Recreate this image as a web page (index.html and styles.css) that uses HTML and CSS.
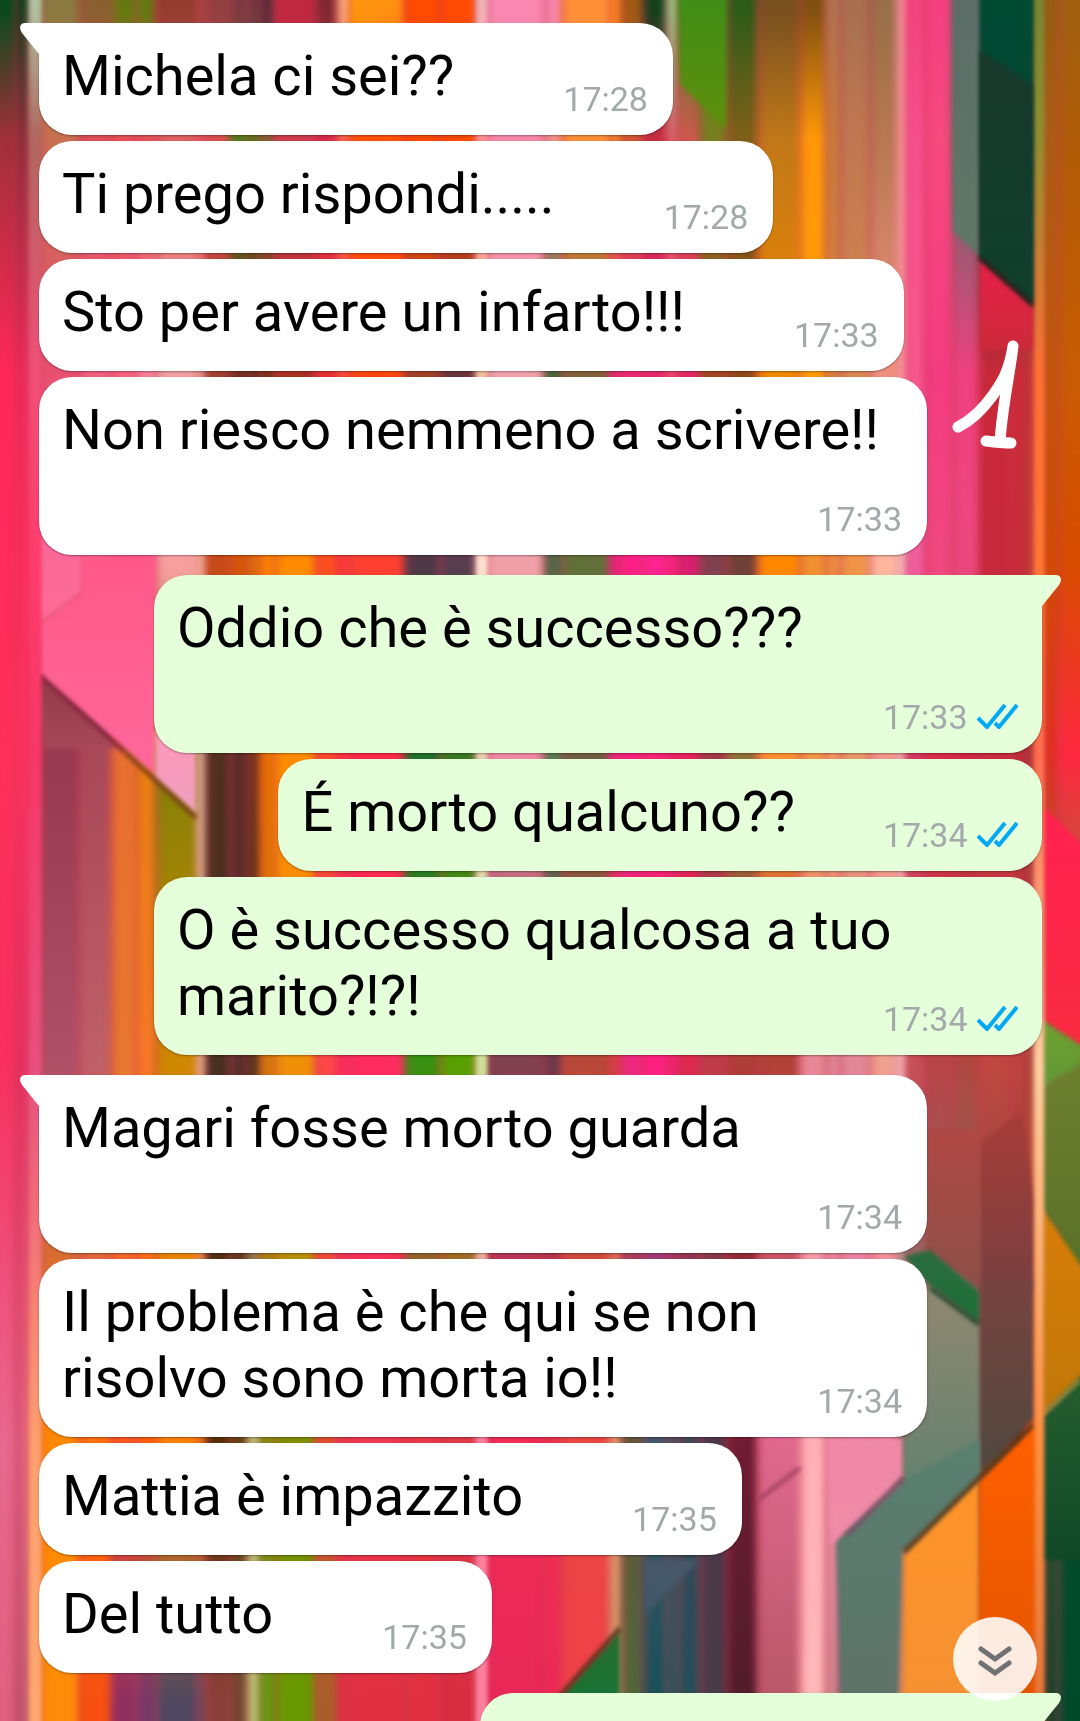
FILE: index.html
```html
<!DOCTYPE html>
<html lang="it">
<head>
    <meta charset="UTF-8">
    <meta name="viewport" content="width=device-width, initial-scale=1.0">
    <title>Chat</title>
    <link rel="stylesheet" href="styles.css">
</head>
<body>
    <svg class="symbols" aria-hidden="true">
        <symbol id="ticks" viewBox="0 0 42 26">
            <path d="M2 15 L11 24 L29 2 M19 20 L23 24 L41 2" fill="none" stroke="#03a9f4" stroke-width="4"/>
        </symbol>
        <symbol id="tail" viewBox="0 0 20 32">
            <path d="M20 0 H5 Q1 0 0 4 Q0 7 2 10 L19 31 L20 32 Z" fill="currentColor"/>
        </symbol>
    </svg>

    <canvas id="wallpaper" class="wallpaper" width="1080" height="1721"></canvas>

    <main class="chat">
        <div class="message first">
            <svg class="tail"><use href="#tail"/></svg>
            Michela ci sei??<time>17:28</time>
        </div>
        <div class="message">Ti prego rispondi.....<time>17:28</time></div>
        <div class="message">Sto per avere un infarto!!!<time>17:33</time></div>
        <div class="message">Non riesco nemmeno a scrivere!!<time>17:33</time></div>

        <div class="message sent first">
            <svg class="tail"><use href="#tail"/></svg>
            Oddio che è successo???<time>17:33 <svg class="ticks"><use href="#ticks"/></svg></time>
        </div>
        <div class="message sent">É morto qualcuno??<time>17:34 <svg class="ticks"><use href="#ticks"/></svg></time></div>
        <div class="message sent">O è successo qualcosa a tuo marito?!?!<time>17:34 <svg class="ticks"><use href="#ticks"/></svg></time></div>

        <div class="message first">
            <svg class="tail"><use href="#tail"/></svg>
            Magari fosse morto guarda<time>17:34</time>
        </div>
        <div class="message">Il problema è che qui se non risolvo sono morta io!!<time>17:34</time></div>
        <div class="message">Mattia è impazzito<time>17:35</time></div>
        <div class="message">Del tutto<time>17:35</time></div>

        <div class="message sent first next">
            <svg class="tail"><use href="#tail"/></svg>
        </div>
    </main>

    <svg class="scribble" viewBox="0 0 70 116" aria-hidden="true">
        <path d="M61 8 C57 36 47 48 41 57 C31 71 20 82 6 89 M61 8 C58 35 50 70 48 104 M34 103 C42 104 50 105 59 105" />
    </svg>

    <button class="scroll-down" aria-label="Vai in fondo">
        <svg viewBox="0 0 34 30"><path d="M3 3 L17 13 L31 3 M3 17 L17 27 L31 17"/></svg>
    </button>

    <script src="wallpaper.js"></script>
</body>
</html>
```
FILE: styles.css
```css
* {
    box-sizing: border-box;
}

body {
    margin: 0;
    height: 100vh;
    overflow: hidden;
    position: relative;
    background-color: #c83850;
    font-family: Roboto, sans-serif;
    color: #000;
}

.symbols {
    position: absolute;
    width: 0;
    height: 0;
}

.wallpaper {
    position: absolute;
    width: 100%;
    height: 100%;
    object-fit: cover;
}


.chat {
    position: relative;
    display: flex;
    flex-direction: column;
    align-items: flex-start;
    gap: 6px;
    height: 100%;
    overflow: hidden;
    padding: 23px 38px 0 39px;
}

.message {
    position: relative;
    display: flow-root;
    flex-shrink: 0;
    max-width: calc(100% - 115px);
    padding: 20px 25px 13px 23px;
    border-radius: 33px;
    background-color: #fff;
    box-shadow: 0 1px 2px rgba(0, 0, 0, 0.35);
    font-size: 56px;
    line-height: 66px;
}

.sent {
    align-self: flex-end;
    padding-right: 24px;
    background-color: #e4ffda;
}

.first {
    border-top-left-radius: 0;
}

.sent.first {
    border-top-left-radius: 33px;
    border-top-right-radius: 0;
}

.message + .first {
    margin-top: 14px;
}

.next {
    width: 56%;
    height: 112px;
}


time {
    float: right;
    margin-top: 33px;
    padding-left: 109px;
    font-size: 34px;
    line-height: 46px;
    color: #a3a9ab;
}

.sent time {
    padding-left: 88px;
}

.ticks {
    width: 42px;
    height: 26px;
}

.tail {
    position: absolute;
    top: 0;
    left: -19px;
    width: 20px;
    height: 32px;
    color: #fff;
}

.sent .tail {
    left: auto;
    right: -19px;
    color: #e4ffda;
    transform: scaleX(-1);
}


.scribble {
    position: absolute;
    top: 338px;
    right: 58px;
    width: 70px;
    height: 116px;
    fill: none;
    stroke: #fff;
    stroke-width: 11px;
    stroke-linecap: round;
    stroke-linejoin: round;
}

.scroll-down {
    position: absolute;
    right: 43px;
    bottom: 20px;
    display: flex;
    align-items: center;
    justify-content: center;
    width: 84px;
    height: 84px;
    padding: 0;
    border: none;
    border-radius: 50%;
    background-color: rgba(255, 255, 255, 0.88);
    cursor: pointer;
}

.scroll-down svg {
    width: 34px;
    height: 30px;
    margin-top: 4px;
    fill: none;
    stroke: #6f7173;
    stroke-width: 5px;
    stroke-linecap: round;
}
```
FILE: wallpaper.js
```js
const canvas = document.getElementById('wallpaper');
const ctx = canvas.getContext('2d');

// heights at which every stripe lists a colour
const rows = [10, 138, 374, 565, 756, 1065, 1440, 1700];

// left edge of the stripe, then its colours from top to bottom
const stripes = [
    [-20, '#0a4a1c #a03038 #ff2858 #ff2c5c #ff3058 #f83060 #e86890 #e06080'],
    [16, '#0a3a16 #8a2c38 #f02858 #ff2c5c #ff3060 #e83060 #e06080 #c05870'],
    [30, '#b0c0a0 #b06860 #f05078 #ff3c6c #f83868 #e85080 #ffa070 #ffa870'],
    [40, '#8a7a40 #c87050 #e85070 #ff6894 #983850 #b05068 #ff8800 #ff8c08'],
    [80, '#8a6030 #e05058 #f06080 #ff6890 #a84858 #c06068 #ff7010 #f85010'],
    [112, '#637a10 #e85058 #f86080 #ff5c8c #e87030 #e87830 #ff5820 #903060'],
    [136, '#637a10 #e85058 #f88098 #ff5890 #e88010 #f87828 #ff6010 #783868'],
    [156, '#943c30 #e06060 #f0a0a0 #f8a0a0 #808008 #d08800 #ff8000 #504860'],
    [198, '#a0483a #f05860 #f0b0a0 #ffd0b0 #e8d0b0 #f8d0a8 #ff8800 #60485c'],
    [206, '#904040 #e05050 #a04030 #c84c18 #503020 #483020 #583008 #8a4038'],
    [230, '#7a3c40 #508018 #703020 #d85808 #582c28 #58302c #604010 #704830'],
    [248, '#6a3a40 #507818 #602c18 #e07008 #683018 #483018 #c0d080 #b8d078'],
    [260, '#582c38 #806030 #783018 #ff8400 #e87000 #d07808 #809010 #609c10'],
    [275, '#c02840 #d03c50 #a83020 #ff8c00 #ff8c00 #f09008 #809000 #689800'],
    [316, '#802830 #d82c48 #e83030 #ff5020 #ff4830 #ff4848 #e05030 #a86028'],
    [338, '#ffb080 #ff6850 #ff5038 #ff3838 #ff3040 #ff2c60 #f03850 #e03040'],
    [350, '#ff9010 #ff5008 #ff4810 #ff4030 #ff2848 #ff2c60 #f03850 #e03040'],
    [405, '#ff4a00 #ff4a00 #a04028 #503848 #207028 #389010 #e83848 #e03040'],
    [440, '#ff4a00 #ff4a00 #683438 #583c50 #387820 #58a000 #e03848 #d82c40'],
    [477, '#f0b0b8 #ff9090 #f0c0a0 #ffe0d0 #e8d0b0 #d0e098 #ff80a0 #ff80a0'],
    [486, '#f888b0 #f888a8 #f0a0a8 #f0a0a8 #f088a0 #804050 #f02c54 #e82858'],
    [545, '#f888b0 #f09890 #406838 #506848 #508050 #683848 #f03050 #f02858'],
    [562, '#ff9038 #ff9038 #806038 #607038 #706040 #b84838 #e84840 #f04048'],
    [610, '#ff8820 #f08828 #e02c70 #e82480 #f02480 #d84040 #e8a070 #d8a068'],
    [622, '#a05a10 #d05830 #f02878 #ff2088 #f82080 #f02880 #605838 #506838'],
    [643, '#14401c #c82c40 #e82870 #ff2490 #f82478 #ff2080 #405868 #1a5058'],
    [667, '#a0d090 #d86870 #f05070 #ff2088 #f02070 #f82078 #405060 #1a5860'],
    [678, '#3a8a18 #d05850 #e82868 #d82070 #e82060 #e02850 #404858 #205058'],
    [700, '#3a8a10 #788020 #a04820 #804050 #a03848 #c03c48 #4c3848 #483c48'],
    [727, '#2c5c18 #806018 #904818 #704038 #907038 #b03c38 #701c34 #501c2c'],
    [758, '#785020 #c07818 #f08800 #ff8800 #ff9030 #b04038 #e06890 #b85868'],
    [800, '#805010 #ff9808 #ff9c08 #f09030 #f09848 #e88898 #ffb0b8 #ffb8b8'],
    [826, '#b07850 #c88038 #d88840 #f09040 #f8a060 #e08898 #f090a8 #d08890'],
    [840, '#a87050 #c07850 #d88850 #f09448 #e89868 #e08898 #f080a8 #706870'],
    [870, '#987048 #b87850 #f09080 #ffb8a0 #f09888 #f0a090 #f080a0 #607868'],
    [898, '#ffb0b0 #ffb0a8 #ffb8b0 #ffe0d8 #ffd0d0 #ffd8d8 #688070 #d8a070'],
    [906, '#f44480 #f85090 #f85890 #f060a0 #d03860 #c85058 #688070 #f09030'],
    [925, '#f44080 #f84880 #f43c80 #f04880 #d82c48 #b84448 #608070 #f89030'],
    [953, '#5c6c68 #587068 #f04080 #ec4880 #d02840 #b04840 #588070 #f89030'],
    [980, '#004a34 #1c382c #c82838 #c8283c #c82c3c #c04840 #504840 #d85c00'],
    [1010, '#004c34 #143c30 #cc2c38 #c82c38 #c02c38 #c04440 #583c30 #e85400'],
    [1026, '#184428 #204024 #b83030 #b83430 #a03030 #a04030 #c05010 #c84c10'],
    [1035, '#788830 #909030 #ff7038 #ff7838 #ff7050 #ffd0a0 #ff9040 #e87838'],
    [1043, '#90600c #a86010 #c05808 #d04c00 #e03020 #68883c #285830 #184028'],
    [1058, '#a06010 #b05c08 #c85c04 #d84c00 #ff2840 #689830 #084c2c #004a2c'],
    [1100]
];

// flat shapes that cut across the stripes
const shapes = [
    { color: ['#5c6c68', '#607868'], points: [[953, -20], [980, -20], [980, 257], [953, 232]] },
    { color: ['#004c34', '#0c4030'], points: [[980, -20], [1034, -20], [1034, 306], [980, 258]] },
    { color: ['#18382c', '#10402c'], points: [[980, 50], [1034, 86], [1034, 304], [980, 258]] },
    { color: ['#e82048', '#cc2a3a'], points: [[980, 260], [1034, 308], [1034, 350], [980, 350]] },
    { color: ['#3c8c18', '#60900c'], points: [[680, -20], [726, -20], [726, 130], [680, 84]] },
    { color: ['#ff9810', '#ff9010'], points: [[352, -20], [400, -20], [376, 24], [352, 24]] },
    { color: ['#f86898', '#ff6c98'], points: [[40, 540], [82, 540], [82, 590], [40, 622]] },
    { color: ['#ff5888', '#ff689c'], points: [[82, 556], [155, 556], [155, 776], [40, 674], [40, 624], [82, 594]] },
    { color: ['#ff98b8', '#f0a0c0'], points: [[155, 730], [196, 730], [196, 814], [155, 778]] },
    { color: ['#903c48', '#a84858'], points: [[40, 678], [118, 748], [44, 748]] },
    { color: ['#ff2050', '#f82c40'], points: [[1043, 806], [1100, 862], [1100, 1058], [1043, 1020]] },
    { color: ['#70a030', '#609838'], points: [[1043, 1022], [1080, 1048], [1080, 1060], [1043, 1088]] },
    { color: ['#708030', '#587028'], points: [[1043, 1090], [1100, 1050], [1100, 1290], [1043, 1206]] },
    { color: ['#d87c08', '#c07808'], points: [[1043, 1210], [1100, 1292], [1100, 1358], [1043, 1414]] },
    { color: ['#286030', '#104828'], points: [[1043, 1418], [1100, 1364], [1100, 1560], [1043, 1560]] },
    { color: ['#a83c38', '#784040'], points: [[980, 1144], [1022, 1110], [1034, 1200], [1034, 1290], [980, 1290]] },
    { color: ['#784440', '#504840'], points: [[980, 1280], [1034, 1280], [1034, 1418], [980, 1470]] },
    { color: ['#b04844', '#8c5048'], points: [[926, 1130], [980, 1130], [980, 1290], [926, 1250]] },
    { color: ['#2c6c40', '#1c7038'], points: [[904, 1256], [930, 1250], [979, 1292], [979, 1322], [928, 1284]] },
    { color: ['#908870', '#588070'], points: [[926, 1284], [979, 1326], [979, 1480], [904, 1550], [904, 1440], [926, 1420]] },
    { color: ['#588070', '#607068'], points: [[904, 1480], [979, 1440], [979, 1478], [902, 1550], [896, 1741], [842, 1741], [836, 1540]] },
    { color: ['#f088a8', '#f08ca8'], points: [[828, 1438], [902, 1438], [902, 1476], [830, 1546]] },
    { color: ['#ff9428', '#f49034'], points: [[904, 1556], [979, 1480], [979, 1741], [904, 1741]] },
    { color: ['#ff6000', '#e05400'], points: [[979, 1480], [1036, 1424], [1036, 1741], [979, 1741]] },
    { color: ['#286c30', '#107838'], points: [[546, 1714], [620, 1630], [620, 1741], [546, 1741]] },
    { color: ['#485868', '#405868'], points: [[643, 1560], [700, 1560], [646, 1614]] }
];

// dark or light seams along the slanted edges
const seams = [
    ['#7c2038', [40, 676], [125, 752]],
    ['#783c18', [125, 752], [196, 818]],
    ['#281c18', [980, 258], [1034, 306]],
    ['#a09040', [1043, 1414], [1080, 1380]],
    ['#5c3410', [904, 1552], [1034, 1424]],
    ['#785068', [846, 1536], [904, 1478]],
    ['#503018', [546, 1712], [620, 1628]],
    ['#a04060', [758, 1500], [800, 1468]],
    ['#184828', [930, 1288], [979, 1324]]
];

function drawStripe([x, colors], i) {
    const width = stripes[i + 1] ? stripes[i + 1][0] - x : 0;
    if (!width) return;

    const gradient = ctx.createLinearGradient(0, 0, 0, 1721);
    colors.split(' ').forEach((color, n) => gradient.addColorStop(rows[n] / 1721, color));
    ctx.fillStyle = gradient;
    ctx.fillRect(x, -20, width + 1, 1761);
}

function draw() {
    ctx.filter = 'blur(5px)';
    stripes.forEach(drawStripe);

    ctx.filter = 'blur(2px)';
    shapes.forEach(({ color, points }) => {
        const ys = points.map(p => p[1]);
        const gradient = ctx.createLinearGradient(0, Math.min(...ys), 0, Math.max(...ys));
        gradient.addColorStop(0, color[0]);
        gradient.addColorStop(1, color[1]);
        ctx.fillStyle = gradient;
        ctx.beginPath();
        points.forEach(p => ctx.lineTo(p[0], p[1]));
        ctx.fill();
    });

    ctx.lineWidth = 4;
    seams.forEach(([color, from, to]) => {
        ctx.strokeStyle = color;
        ctx.beginPath();
        ctx.moveTo(...from);
        ctx.lineTo(...to);
        ctx.stroke();
    });

    // the bright slats stay crisp
    [30, 477, 1035].forEach(x => {
        const i = stripes.findIndex(stripe => stripe[0] === x);
        drawStripe(stripes[i], i);
    });
}

draw();
```
